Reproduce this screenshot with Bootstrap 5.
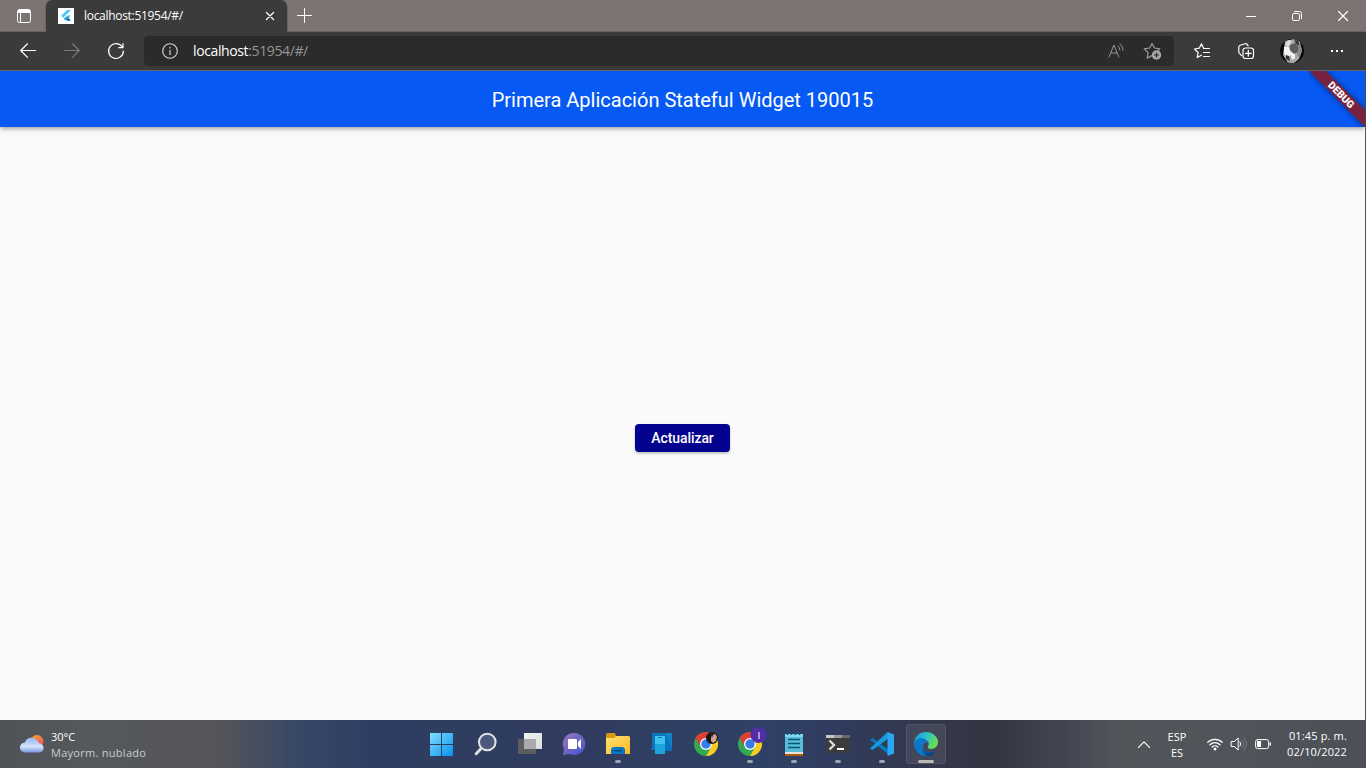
<!DOCTYPE html>
<html lang="es">
<head>
<meta charset="utf-8">
<meta name="viewport" content="width=device-width, initial-scale=1">
<title>Primera Aplicación</title>
<link href="https://cdn.jsdelivr.net/npm/bootstrap@5.3.0/dist/css/bootstrap.min.css" rel="stylesheet">
<style>
body{font-family:"Open Sans","Noto Sans",sans-serif;font-size:12px;line-height:16px;background:#3b3b3b}
svg{display:block;flex:none;overflow:visible}
.ln{fill:none;stroke:#fff;stroke-linecap:round;stroke-linejoin:round}
.strip{height:32px;background:#7c7473;box-shadow:inset 0 -1px #686262}
.strip-menu{width:46px}
.browser-tab{width:241px;background:#3b3b3b;border-radius:7px 7px 0 0;padding:0 12px 0 12px;box-shadow:0 0 2px #3b3b3b}
.favicon{width:16px;height:16px;background:#fff}
.tab-title{letter-spacing:-.3px;margin-left:10px}
.new-tab{width:33px}
.win-btn{width:46px}
.toolbar{height:38px;background:#3b3b3b;padding-left:6px}
.tool{width:44px}
.address{width:1030px;height:30px;background:#2b2b2b;border-radius:4px;margin-left:6px;padding:0 13px 0 18px}
.url{font-size:14px;letter-spacing:-.38px;margin-left:15px;color:#959595}
.url span{color:#fff}
.edge-line{height:1px;background:#686868}
.page-view{background:#fafafa;border-right:1px solid #555;font-family:Roboto,sans-serif}
.app-bar{height:56px;background:#0659f3;color:#fff;font-size:20px;padding-top:2px;box-shadow:0 2px 4px -1px rgba(0,0,0,.3),0 3px 5px rgba(0,0,0,.12)}
.ribbon{width:56px;height:56px}
.ribbon svg{overflow:hidden}
.counter-body{padding-top:29px}
.btn-update{height:28px;width:95px;background:#03038f;color:#fff;border:0;border-radius:4px;font-size:14px;font-weight:500;letter-spacing:-.08px;box-shadow:0 2px 2px rgba(0,0,0,.14),0 1px 3px rgba(0,0,0,.12)}
.btn-update:hover{background:#03038f;color:#fff}
.taskbar{height:48px;background:linear-gradient(90deg,#505256 0,#55585d 6%,#545559 16%,#364866 22%,#303d62 27%,#2e3d60 35%,#303b5e 41%,#303e61 47%,#2f4066 56%,#303c5f 61%,#32384c 67%,#343542 73%,#424653 78%,#53555b 82%,#505359 92%,#4c4f55 100%);color:#fff;font-size:11px;line-height:16px}
.weather{width:420px;padding-left:20px}
.weather-text{margin-left:7px;padding-top:2px}
.muted-text{color:#cbcccf;letter-spacing:.28px}
.task{width:44px;height:48px}
.task-on{width:40px;height:40px;margin:0 2px;background:rgba(255,255,255,.08);border:1px solid rgba(255,255,255,.09);border-radius:4px}
.dot{left:50%;transform:translateX(-50%);bottom:5px;width:6px;height:3px;border-radius:2px;background:#a0a4b0}
.task-on .dot{bottom:0;width:16px;background:#bdb9b7}
.lang{width:46px;padding-top:2px}
.clock{width:76px;letter-spacing:.15px}
</style>
</head>
<body class="vh-100 overflow-hidden d-flex flex-column">
<header class="strip d-flex text-white flex-shrink-0">
  <div class="strip-menu d-flex align-items-center justify-content-center">
    <svg width="16" height="16" style="margin-left:2px"><path class="ln" d="M3.5 1.5h9a2 2 0 0 1 2 2v9a2 2 0 0 1-2 2h-9a2 2 0 0 1-2-2v-9a2 2 0 0 1 2-2z"/><path fill="#fff" d="M2 2h12v3H5v9H4V5H2z"/></svg>
  </div>
  <div class="browser-tab d-flex align-items-center">
    <div class="favicon d-flex align-items-center justify-content-center"><svg width="12" height="14" viewBox="0 0 12 14"><path fill="#45c7f7" d="M7.2 1H11L3.2 8.7 1.2 6.8zM7.2 6.5H11L7.8 9.8 5.8 7.8z"/><path fill="#0866a8" d="M5.8 9.8l1.9-1.9 3.3 3.9H7.4z"/><path fill="#2ba2df" d="M3.8 9.7l2-2 2 2-2 2z"/></svg></div>
    <span class="tab-title">localhost:51954/#/</span>
    <svg class="ms-auto" width="10" height="10"><path class="ln" stroke-width="1.3" d="M1.5 1.5l7 7m0-7l-7 7"/></svg>
  </div>
  <div class="new-tab d-flex align-items-center justify-content-center"><svg width="14" height="14"><path class="ln" d="M7 0v14M0 7h14" transform="translate(.5 -.5)"/></svg></div>
  <div class="ms-auto d-flex">
    <div class="win-btn d-flex align-items-center justify-content-center"><svg width="10" height="10"><path class="ln" d="M.5 5.5h9"/></svg></div>
    <div class="win-btn d-flex align-items-center justify-content-center"><svg width="10" height="10"><rect class="ln" x=".5" y="2.5" width="7" height="7" rx="1.3"/><path class="ln" d="M2.5.5h5a2 2 0 0 1 2 2v5"/></svg></div>
    <div class="win-btn d-flex align-items-center justify-content-center"><svg width="10" height="10"><path class="ln" stroke-width="1.2" d="M.5.5l9 9m0-9l-9 9"/></svg></div>
  </div>
</header>
<nav class="toolbar d-flex align-items-center flex-shrink-0 text-white">
  <div class="tool d-flex justify-content-center"><svg width="16" height="16"><path class="ln" stroke-width="1.2" d="M15.5 7.5H.7M7.5.8L.7 7.5l6.8 6.8"/></svg></div>
  <div class="tool d-flex justify-content-center"><svg width="16" height="16"><path class="ln" style="stroke:#7b7b7b" stroke-width="1.2" d="M.5 7.5h14.8M8.5.8l6.8 6.7-6.8 6.8"/></svg></div>
  <div class="tool d-flex justify-content-center"><svg width="16" height="16"><path class="ln" stroke-width="1.2" d="M14.5 4.5A7.4 7.4 0 1 0 15.4 8M15 .5v4.2h-4.2"/></svg></div>
  <div class="address d-flex align-items-center">
    <svg width="16" height="16"><circle class="ln" cx="8" cy="8" r="7.3" style="stroke:#d8d8d8" stroke-width="1.1"/><path stroke="#bdbdbd" stroke-width="1.4" d="M8 7v5M8 4v1.6"/></svg>
    <div class="url"><span>localhost</span>:51954/#/</div>
    <svg class="ms-auto" width="16" height="16"><path class="ln" style="stroke:#959595" d="M1 14L5.9 2l4.9 12M2.6 10h6.7M10 3q1.7 1.3 1.8 4M12 1q3 2.3 3.1 6.3"/></svg>
    <svg style="margin-left:19px" width="18" height="16"><path class="ln" style="stroke:#9c9c9c" stroke-width="1.2" d="M15.4 7.3l1.4-1.5-5.3-.8L9 .5 6.6 5l-5.4.8 3.9 3.8-.9 5.5L9 12.6"/><circle cx="13.5" cy="12" r="4.7" fill="#aaa"/><path stroke="#2b2b2b" stroke-width="1.2" d="M13.5 9.4v5.2M10.9 12h5.2"/></svg>
  </div>
  <div class="tool ms-1 ps-1 d-flex justify-content-center"><svg width="16" height="16"><path class="ln" stroke-width="1.2" d="M15.5 5.5H9.7L7.5.8 5.3 5.2.5 6l3.6 3.5-.9 5 4.2-2.3M9.5 9.5h6M9.5 13.5h6"/></svg></div>
  <div class="tool ps-1 d-flex justify-content-center"><svg width="16" height="16"><path class="ln" stroke-width="1.2" d="M3.5 12.5L1.3 10.2a3 3 0 0 1-.5-1.5V4.2a2 2 0 0 1 1.4-1.9l5-1.5a2 2 0 0 1 2.2.8l.7 1.3"/><rect class="ln" stroke-width="1.2" x="5" y="5" width="10.5" height="10.5" rx="2.5"/><path class="ln" stroke-width="1.3" d="M10.3 7.5v5.6M7.5 10.3h5.6"/></svg></div>
  <div class="tool ps-2 d-flex justify-content-center"><svg width="24" height="24"><defs><clipPath id="round"><circle cx="12" cy="12" r="12"/></clipPath></defs><g clip-path="url(#round)"><path fill="#090909" d="M0 0h24v24H0z"/><path fill="#aaa" d="M5 2l9-2 6 3 2 9-3 8-5 4H8l-5-8z"/><path fill="#f4f4f4" d="M4 8l4-1 3 6 4 1v5l-3 2-1-5-4 3-3-5z"/><path fill="#ddd" d="M8 1l4 1-3 5-4-1z"/><path fill="#5c5c5c" d="M10 6l5-2 4 4-1 5-4 2-4-4z"/><path fill="#333" d="M14 1l4 1 2 5-4-2zM6 16l3 1 1 5-4-2z"/><path fill="#888" d="M19 5l3 5-3 9-2-3z"/></g></svg></div>
  <div class="tool ps-2 d-flex justify-content-center"><svg width="14" height="4"><path fill="#fff" d="M1 1h2v2H1zM6 1h2v2H6zM11 1h2v2h-2z" transform="translate(1)"/></svg></div>
</nav>
<div class="edge-line flex-shrink-0"></div>
<main class="page-view d-flex flex-column flex-grow-1 position-relative">
  <div class="app-bar d-flex align-items-center justify-content-center">Primera Aplicación Stateful Widget 190015</div>
  <div class="ribbon position-absolute top-0 end-0">
    <svg width="56" height="56" role="img" aria-label="debug"><defs><filter id="soft" x="-50%" y="-50%" width="200%" height="200%"><feGaussianBlur stdDeviation="3"/></filter></defs>
    <path d="M0 0H17L60 43V60z" fill="#000" opacity=".5" filter="url(#soft)"/><path d="M0 0H17L60 43V60z" fill="#782242"/>
    <text transform="translate(32.3 23.8) rotate(45)" y="3.6" text-anchor="middle" fill="#fff" font-family="Roboto" font-weight="900" font-size="10.2">DEBUG</text></svg>
  </div>
  <div class="counter-body flex-grow-1 d-flex align-items-center justify-content-center"><button class="btn btn-update p-0" type="button">Actualizar</button></div>
</main>
<footer class="taskbar d-flex align-items-center flex-shrink-0">
  <div class="weather d-flex align-items-center">
    <svg width="24" height="24"><defs><linearGradient id="cloud" x2="0" y2="1"><stop stop-color="#8fb4ee"/><stop offset=".6" stop-color="#d5e3f9"/><stop offset="1" stop-color="#7899e5"/></linearGradient><linearGradient id="sun" x2=".4" y2="1"><stop stop-color="#f7a72c"/><stop offset="1" stop-color="#f54d5d"/></linearGradient></defs><circle cx="17" cy="9.5" r="6.5" fill="url(#sun)"/><path fill="url(#cloud)" d="M5 20.5a5 5 0 0 1-.2-10A7 7 0 0 1 17 8.3a6 6 0 0 1 2 3 4.6 4.6 0 0 1 0 9.2z"/></svg>
    <div class="weather-text"><div>30°C</div><div class="muted-text">Mayorm. nublado</div></div>
  </div>
  <div class="task d-flex align-items-center justify-content-center"><svg width="24" height="24"><defs><linearGradient id="win" x2="1" y2="1"><stop stop-color="#7fe0ff"/><stop offset="1" stop-color="#0791ee"/></linearGradient></defs><path fill="url(#win)" d="M0 1h11v11H0zM12 1h11v11H12zM0 13h11v11H0zM12 13h11v11H12z"/></svg></div>
  <div class="task d-flex align-items-center justify-content-center"><svg width="24" height="24"><circle cx="13.3" cy="10" r="8.3" fill="#566483" fill-opacity=".75" stroke="#e3e5ea" stroke-width="2"/><path d="M7.1 16.5L2.2 21.7" stroke="#dfdfdf" stroke-width="3" stroke-linecap="round"/></svg></div>
  <div class="task d-flex align-items-center justify-content-center"><svg width="24" height="24"><defs><linearGradient id="pane" x2="1" y2="1"><stop stop-color="#f3f3f3"/><stop offset="1" stop-color="#ddd"/></linearGradient></defs><path fill="url(#pane)" d="M6 1h18v16H6z"/><path fill="#5d5d5d" d="M0 7h18v15H0z"/><path fill="#a9aaab" d="M6 7h12v10H6z"/></svg></div>
  <div class="task d-flex align-items-center justify-content-center"><svg width="24" height="24"><defs><linearGradient id="chat" x2="1" y2="1"><stop stop-color="#9a76bc"/><stop offset="1" stop-color="#4353cf"/></linearGradient></defs><path fill="url(#chat)" d="M12.5 1a11 11 0 1 1-4.8 21L1 23l1-6A11 11 0 0 1 12.5 1z"/><rect x="6" y="7" width="9" height="10" rx="1" fill="#fff"/><path fill="#fff" d="M16 10l3-3v10l-3-3z"/></svg></div>
  <div class="task position-relative d-flex align-items-center justify-content-center"><svg width="24" height="24"><defs><linearGradient id="folder" x2="1" y2="1"><stop stop-color="#ffe079"/><stop offset="1" stop-color="#fdb91e"/></linearGradient></defs><path fill="#d99a10" d="M0 2.5L1 1h8l1 3v3H0z"/><path fill="url(#folder)" d="M0 6h8l2-2h13l1 1v17H0z"/><path fill="#0875c3" d="M5 17l2-2h10l2 2v5H5z"/><path fill="#064e91" d="M8 18h8v1.5H8z"/></svg><i class="dot position-absolute"></i></div>
  <div class="task d-flex align-items-center justify-content-center"><svg width="24" height="24"><path fill="#0a75bd" d="M2 1h20v16H2zM1 16h4v2H1zM15 17h7v2h-7z"/><path fill="#0f82c8" d="M15 1h7v15z"/><path fill="#3dc3ee" d="M5 4h10v18H5z"/><path fill="#1da4dc" d="M5 12h10v10H5z"/><path fill="#09639d" d="M8.5 5h3v1h-3z"/></svg></div>
  <div class="task d-flex align-items-center justify-content-center"><svg width="24" height="24"><defs><g id="chrome"><circle cx="12" cy="12" r="12" fill="#31a852"/><path fill="#df3e32" d="M1.6 6a12 12 0 0 1 20.8 0H12L6.8 15z"/><path fill="#fbcb20" d="M12 6h10.4A12 12 0 0 1 12 24l5.2-9z"/><circle cx="12" cy="12" r="6" fill="#fff"/><circle cx="12" cy="12" r="4.7" fill="#347ce9"/></g></defs><use href="#chrome"/><circle cx="18" cy="6" r="6" fill="#171315"/><path fill="#d0a590" d="M17 2l4-1 2 4-1 4-3 2-2-2z"/><path fill="#332422" d="M16 1l4-1 2 2-3 1-1 3z"/></svg></div>
  <div class="task position-relative d-flex align-items-center justify-content-center"><svg width="24" height="24"><use href="#chrome"/><circle cx="20.5" cy="3" r="8" fill="#512da8"/><path stroke="#d8cfee" stroke-width="1.3" d="M21 0v7"/></svg><i class="dot position-absolute"></i></div>
  <div class="task position-relative d-flex align-items-center justify-content-center"><svg width="24" height="24"><path fill="#e8e2dd" d="M3 20h18v2H3z"/><path fill="#aa560b" d="M3 22h18v2H3z"/><path fill="#57bdd9" d="M3 2h18v18H3z"/><path fill="#82d9eb" d="M3 2h18v3H3z"/><path stroke="#075673" stroke-width="1.5" d="M5.5 0v3M9.5 0v3M13.5 0v3M17.5 0v3M6 7.5h12M6 11.5h12M6 15.5h12"/></svg><i class="dot position-absolute"></i></div>
  <div class="task position-relative d-flex align-items-center justify-content-center"><svg width="24" height="24"><path fill="#3b3b3b" d="M0 3h24v18H0z"/><path fill="#c6c6c6" d="M0 3h8v3H0z"/><path fill="#999" d="M8 3h8v3H8z"/><path fill="#696969" d="M16 3h8v3h-8z"/><path fill="none" stroke="#ddd" stroke-width="2.3" d="M3.5 8.5l4.5 4.5-4.5 4.5"/><path stroke="#fff" stroke-width="2" d="M11 17h7"/></svg><i class="dot position-absolute"></i></div>
  <div class="task position-relative d-flex align-items-center justify-content-center"><svg width="24" height="24"><path fill="#087bc0" d="M0 7.5L2.5 6 19 18v5z"/><path fill="#139bde" d="M0 16.5L17.5 0 19 6 2.5 18z"/><path fill="#28a9f2" d="M17.5 0L24 2.5v19L17.5 24z"/></svg><i class="dot position-absolute"></i></div>
  <div class="task-on position-relative d-flex align-items-center justify-content-center"><svg width="24" height="24"><defs><linearGradient id="edge" x2="1" y2=".4"><stop stop-color="#1896e3"/><stop offset=".55" stop-color="#2bc3c7"/><stop offset="1" stop-color="#67de52"/></linearGradient><linearGradient id="wave" x2=".6" y2="1"><stop stop-color="#128bd5"/><stop offset="1" stop-color="#073e82"/></linearGradient></defs><path fill="url(#edge)" d="M0 11C1 3 7 0 12 0c7 0 12 5 12 10 0 4-3 7-7 7-2 0-4-1-3-3 2-3 0-6-4-6-5 0-8 1-10 4z"/><path fill="#0b78c9" d="M0 11c1-3 4-5 7-5 4 0 7 3 7 5-5-2-6 4-4 7 2 4 7 4 12 1-3 4-7 5-10 5C5 24 0 18 0 11z"/><path fill="url(#wave)" d="M9 10c-3 4-2 11 4 14 4 0 7-2 9-5-5 3-14 1-13-6z"/></svg><i class="dot position-absolute"></i></div>
  <div class="ms-auto d-flex align-items-center">
    <svg width="12" height="7"><path class="ln" stroke-width="1.2" d="M.5 6.3L6 .8l5.5 5.5"/></svg>
    <div class="lang text-center ms-1">ESP<br>ES</div>
    <svg style="margin-left:7px" width="16" height="14"><path class="ln" stroke-width="1.3" d="M.7 5.4a10.3 10.3 0 0 1 14.6 0M3 7.7a7 7 0 0 1 10 0M5.2 10a4 4 0 0 1 5.6 0"/><circle cx="8" cy="12" r="1.5" fill="#fff"/></svg>
    <svg style="margin-left:8px" width="16" height="14"><path class="ln" d="M.5 4.5h2.7l4-3.5v12l-4-3.5H.5zM9 5q1.5 2 0 4"/><path class="ln" style="stroke:#777b82" d="M11 3q3 4 0 8M13 1q5 6 0 12"/></svg>
    <svg style="margin-left:8px" width="16" height="10"><rect class="ln" x=".6" y=".6" width="13" height="9" rx="2"/><path fill="#fff" d="M2 2h4v6H2zM14.5 3.5H16v3h-1.5z"/></svg>
    <div class="clock text-end" style="margin-right:19px">01:45 p. m.<br>02/10/2022</div>
  </div>
</footer>
<script src="https://cdn.jsdelivr.net/npm/bootstrap@5.3.0/dist/js/bootstrap.bundle.min.js"></script>
</body>
</html>
